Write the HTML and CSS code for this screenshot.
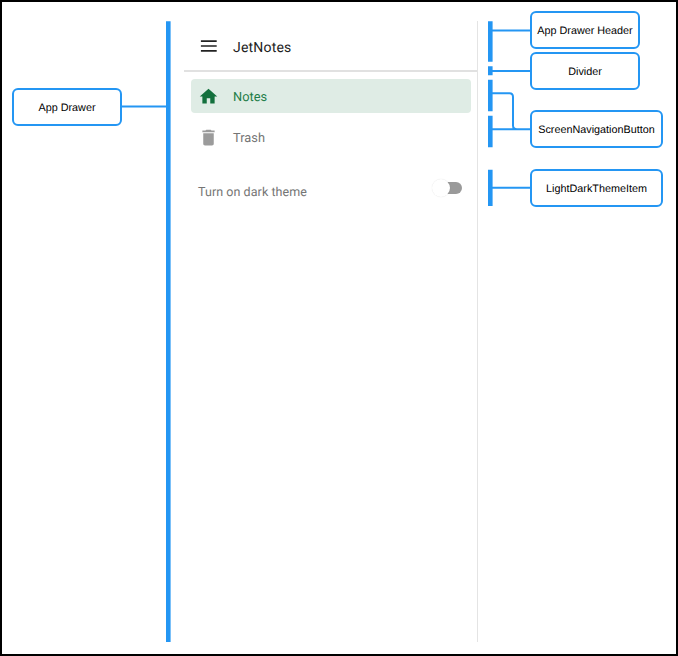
FILE: index.html
```html
<!DOCTYPE html>
<html lang="en">
<head>
<meta charset="utf-8">
<title>App Drawer</title>
<link rel="stylesheet" href="styles.css">
</head>
<body>
<main class="diagram">
  <svg class="connectors" width="678" height="656" viewBox="0 0 678 656" aria-hidden="true">
    <g class="bars">
      <path d="M168.3 21.3V642M490.3 21.3V61.8M490.3 66.3V75.3M490.3 79.8V111.3M490.3 115.8V147.2M490.3 169.8V206"/>
    </g>
    <g class="links">
      <path d="M122 106.5H166M492 30.5H531M492 71H531M492 93.3H509.5Q513 93.3 513 97V125.5Q513 129.3 517 129.3M492 129.3H531M492 187.8H531"/>
    </g>
  </svg>
  <section class="drawer">
    <header class="drawer-header">
      <svg class="menu-icon" viewBox="0 0 18 12"><path d="M.9 1.2H16.7M.9 6H16.7M.9 10.8H16.7"/></svg>
      <span class="title">JetNotes</span>
    </header>
    <nav class="drawer-nav">
      <a class="nav-item active">
        <svg class="icon" viewBox="0 0 24 24"><path d="M10 20v-6h4v6h5v-8h3L12 3 2 12h3v8z"/></svg>
        <span class="label">Notes</span>
      </a>
      <a class="nav-item">
        <svg class="icon" viewBox="0 0 24 24"><path d="M6 19c0 1.1.9 2 2 2h8c1.1 0 2-.9 2-2V7H6v12zM19 4h-3.5l-1-1h-5l-1 1H5v2h14V4z"/></svg>
        <span class="label">Trash</span>
      </a>
    </nav>
    <div class="theme-item">
      <span class="label">Turn on dark theme</span>
      <span class="switch"></span>
    </div>
  </section>
  <div class="node app-drawer">App Drawer</div>
  <div class="node header-node">App Drawer Header</div>
  <div class="node divider-node">Divider</div>
  <div class="node wide button-node">ScreenNavigationButton</div>
  <div class="node wide theme-node">LightDarkThemeItem</div>
</main>
</body>
</html>
```
FILE: styles.css
```css
* { box-sizing: border-box; }
body { margin: 0; background: #fff; text-rendering: geometricPrecision; }
.diagram {
  position: relative;
  width: 678px;
  height: 656px;
  padding: 19px 0 0 182px;
  border: 2px solid #000;
  overflow: hidden;
}
.connectors { position: absolute; left: -2px; top: -2px; fill: none; stroke: #2496f3; }
.bars { stroke-width: 4.6; }
.links { stroke-width: 2; }
.drawer {
  width: 294px;
  height: 621px;
  border-right: 1px solid #e4e4e4;
  font-family: Roboto, sans-serif;
  color: #757575;
}
.drawer-header {
  display: flex;
  align-items: center;
  height: 51px;
  padding: 2px 0 0 16px;
  gap: 15px;
  border-bottom: 2px solid #e1e1e1;
  color: #222;
  font-size: 14px;
  letter-spacing: .2px;
}
.title { padding-top: 2px; }
.label { padding-top: 2px; }
.menu-icon { width: 18px; height: 12px; margin-top: -1px; fill: none; stroke: #222; stroke-width: 1.7; }
.drawer-nav { display: flex; flex-direction: column; gap: 7px; padding: 7px 6px 0 7px; }
.nav-item {
  display: flex;
  align-items: center;
  height: 34px;
  padding-left: 7px;
  gap: 14px;
  border-radius: 4px;
  font-size: 12.8px;
  letter-spacing: .05px;
}
.icon { width: 21px; height: 21px; fill: #9b9b9b; }
.active { background: #dfece5; color: #1d7d48; }
.active .icon { fill: #13703d; }
.theme-item {
  display: flex;
  align-items: center;
  justify-content: space-between;
  height: 26px;
  margin: 24px 15px 0 14px;
  font-size: 12.5px;
  letter-spacing: .06px;
}
.switch {
  position: relative;
  width: 24px;
  height: 12px;
  margin-bottom: 6px;
  border-radius: 6px;
  background: #9a9a9a;
}
.switch::before {
  content: "";
  position: absolute;
  left: -6px;
  top: -3px;
  width: 18px;
  height: 18px;
  border-radius: 50%;
  background: #fff;
  box-shadow: 0 0 1px rgba(0, 0, 0, .15);
}
.node {
  position: absolute;
  display: flex;
  align-items: center;
  justify-content: center;
  width: 110px;
  height: 38px;
  padding-top: 1px;
  border: 2px solid #2496f3;
  border-radius: 6px;
  background: #fff;
  color: #000;
  font: 10.8px "Liberation Sans", Arial, sans-serif;
  white-space: nowrap;
}
.wide { width: 133px; }
.app-drawer { left: 10px; top: 86px; }
.header-node { left: 528px; top: 9px; }
.divider-node { left: 528px; top: 50px; }
.button-node { left: 528px; top: 108px; }
.theme-node { left: 528px; top: 167px; }
```
